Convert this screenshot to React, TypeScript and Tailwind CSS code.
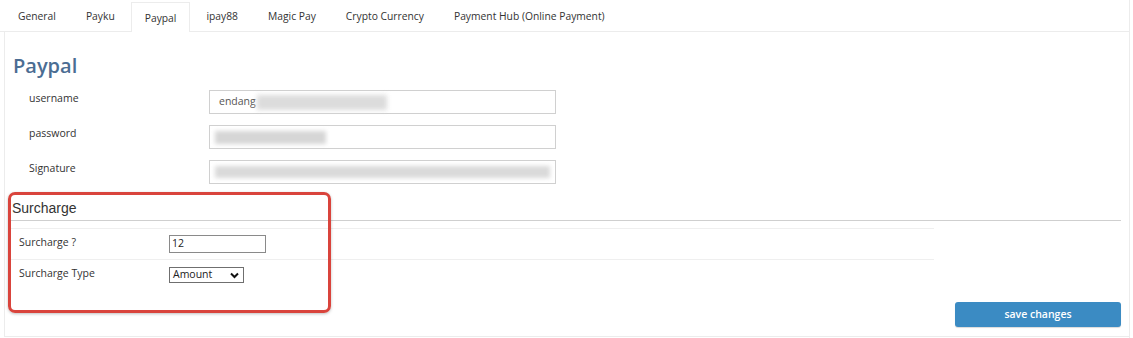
import React from "react";

const font = { fontFamily: '"Open Sans", "Noto Sans", sans-serif' };

const tabs = ["General", "Payku", "Paypal", "ipay88", "Magic Pay", "Crypto Currency", "Payment Hub (Online Payment)"];

function Field({ label, children }: { label: string; children: React.ReactNode }) {
  return (
    <div className="flex items-start">
      <div className="w-[196px] pl-[16px] pt-[1px] text-[10.5px] leading-[14px] text-[#333]">{label}</div>
      <div className="w-[347px] h-[24px] border border-[#d0d0d0] bg-white flex items-center">{children}</div>
    </div>
  );
}

export default function App() {
  return (
    <div className="relative w-[1133px] h-[338px] bg-white overflow-hidden" style={font}>
      <div className="w-[1130px] h-[338px] border-r border-[#ececec]">
        {/* tabs */}
        <div className="flex h-[32px] pl-[4px] border-b border-[#ececec] items-end">
          {tabs.map((t) => (
            <div
              key={t}
              className={
                t === "Paypal"
                  ? "h-[30px] px-[13px] mr-[2px] flex items-center border border-b-0 border-[#ececec] bg-white text-[10.3px] text-[#333] -mb-[1px] pt-[3px]"
                  : "h-[30px] px-[13px] mr-[2px] flex items-center border border-transparent text-[10.3px] text-[#333] pt-[2px]"
              }
            >
              {t}
            </div>
          ))}
        </div>
        {/* panel */}
        <div className="ml-[4px] border-l border-b border-[#ececec] h-[305px] pl-[8px] pt-[22px]">
          <h2 className="text-[20px] leading-[24px] text-[#4b6d93] font-semibold">Paypal</h2>
          <div className="mt-[12px] flex flex-col gap-[11px]">
            <Field label="username">
              <span className="pl-[9px] text-[10.5px] text-[#555]">endang</span>
              <div className="ml-[1px] w-[130px] h-[15px] bg-[#dcdcdc] blur-[2.5px]" />
            </Field>
            <Field label="password">
              <div className="ml-[5px] w-[111px] h-[13px] bg-[#d6d6d6] blur-[2px]" />
            </Field>
            <Field label="Signature">
              <div className="ml-[5px] w-[335px] h-[12px] bg-[#dadada] blur-[2px]" />
            </Field>
          </div>
          {/* surcharge */}
          <div className="-ml-[3px] mt-[14px] w-[1111px]">
            <div className="h-[23px] border-b border-[#cfcfcf] pl-[2px] text-[14px] leading-[20px] text-[#333]" style={{ fontFamily: '"Liberation Sans", Arial, sans-serif' }}>
              Surcharge
            </div>
            <div className="mt-[7px] w-[924px]">
              <div className="h-[31px] border-t border-[#efefef] flex items-start pt-[6px]">
                <div className="w-[159px] pl-[9px] text-[10.5px] leading-[14px] text-[#333]">Surcharge ?</div>
                <div className="w-[97px] h-[18px] border border-[#8a8a8a] bg-white flex items-center pl-[2px] text-[10.5px] text-[#222]">12</div>
              </div>
              <div className="h-[31px] border-t border-[#efefef] flex items-start pt-[6px]">
                <div className="w-[159px] pl-[9px] text-[10.5px] leading-[14px] text-[#333]">Surcharge Type</div>
                <div className="w-[75px] h-[16px] border border-[#6f6f6f] bg-white flex items-center justify-between pl-[3px] pr-[4px] text-[10.5px] text-[#222] mt-[1px]">
                  <span>Amount</span>
                  <svg width="9" height="7" viewBox="0 0 9 7">
                    <path d="M1 1.5 L4.5 5 L8 1.5" fill="none" stroke="#111" strokeWidth="2" />
                  </svg>
                </div>
              </div>
            </div>
            <div className="mt-[12px] flex justify-end">
              <button className="w-[166px] h-[25px] rounded-[3px] bg-[#3b8bc3] text-white text-[10.5px] font-semibold flex items-center justify-center shadow-[0_1px_1px_rgba(0,0,0,0.15)]">
                save changes
              </button>
            </div>
          </div>
        </div>
      </div>
      {/* annotation */}
      <div className="absolute left-[8px] top-[192px] w-[323px] h-[121px] border-[3px] border-[#d9443c] rounded-[7px] shadow-[0_1px_3px_rgba(0,0,0,0.25)]" />
    </div>
  );
}
